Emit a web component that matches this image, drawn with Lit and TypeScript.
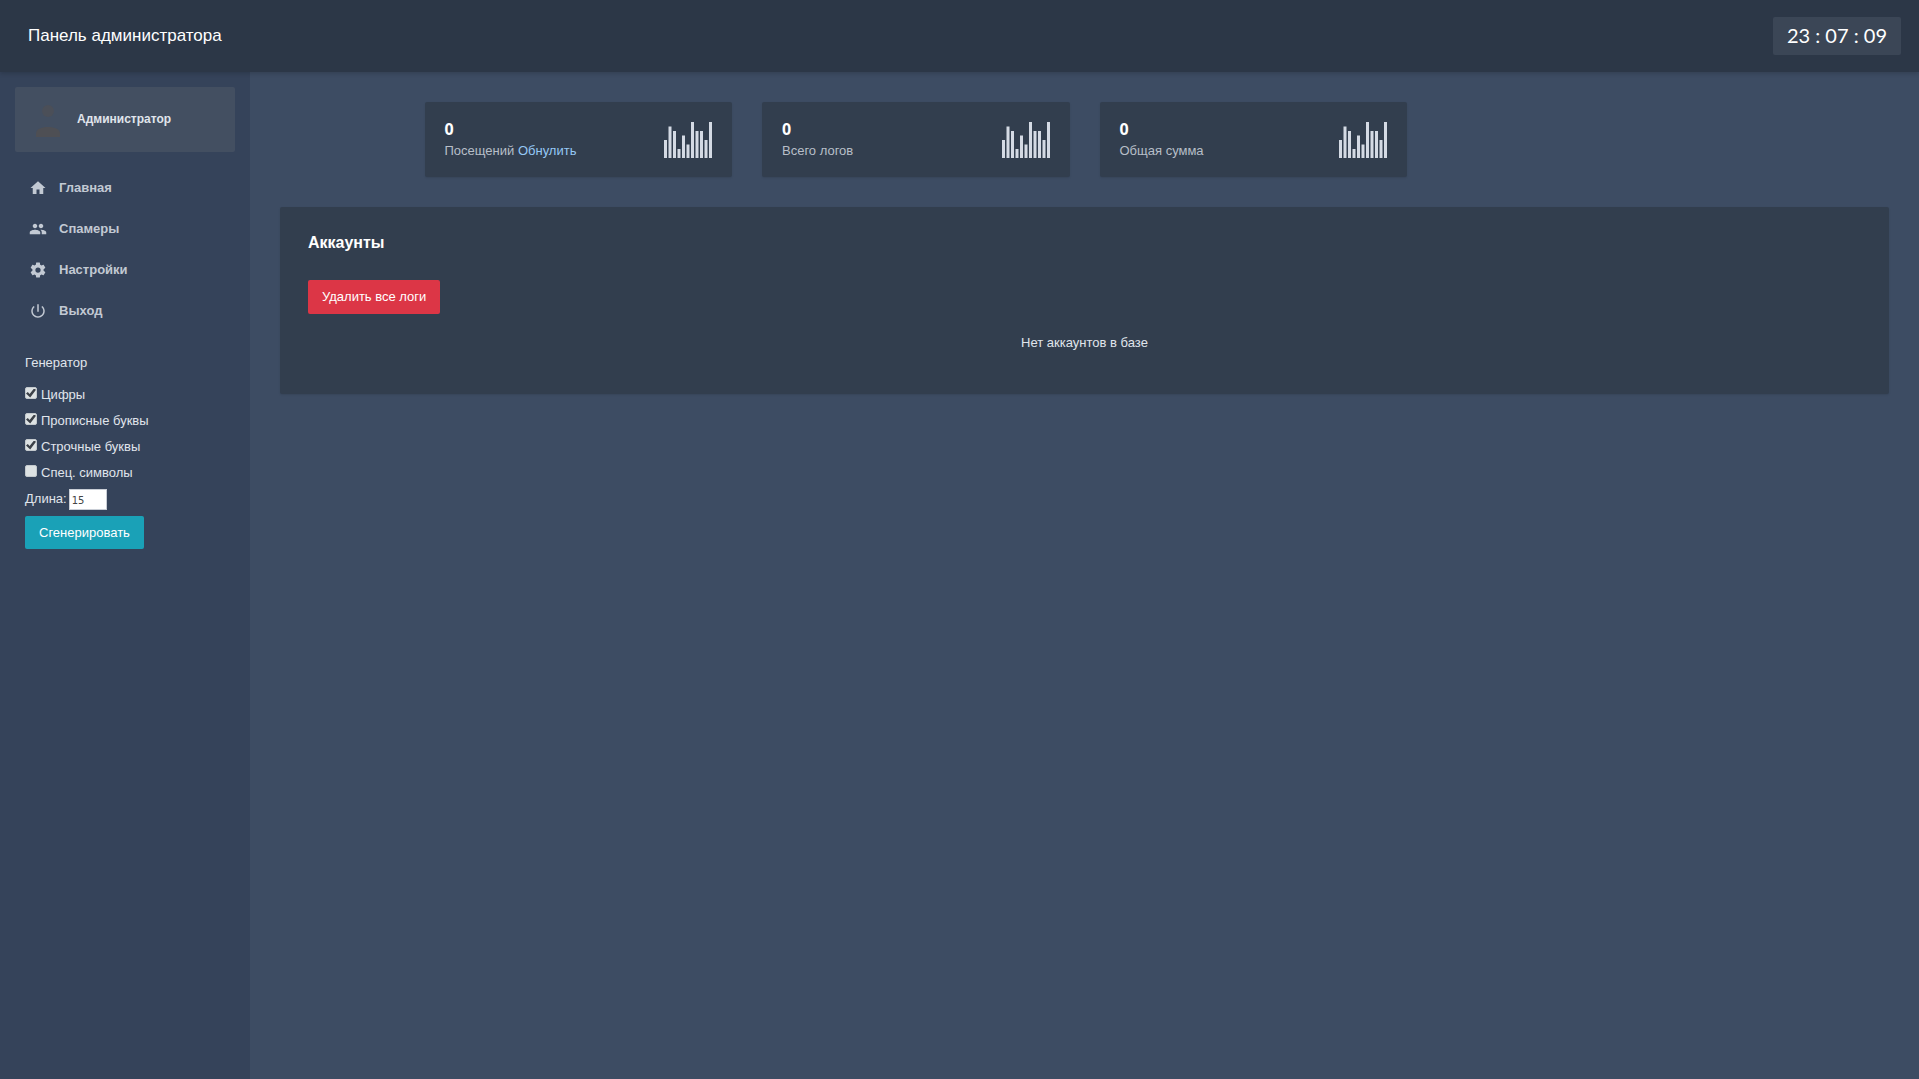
import { LitElement, html, css, svg } from "lit";
import { customElement, property, state } from "lit/decorators.js";

const NAV = [
  { label: "Главная", path: "M10 20v-6h4v6h5v-8h3L12 3 2 12h3v8z" },
  {
    label: "Спамеры",
    path: "M16 11c1.66 0 2.99-1.34 2.99-3S17.66 5 16 5c-1.66 0-3 1.34-3 3s1.34 3 3 3zm-8 0c1.66 0 2.99-1.34 2.99-3S9.66 5 8 5C6.34 5 5 6.34 5 8s1.34 3 3 3zm0 2c-2.33 0-7 1.17-7 3.5V19h14v-2.5c0-2.33-4.67-3.5-7-3.5zm8 0c-.29 0-.62.02-.97.05 1.16.84 1.97 1.97 1.97 3.45V19h6v-2.5c0-2.33-4.67-3.5-7-3.5z",
  },
  {
    label: "Настройки",
    path: "M12 15.5A3.5 3.5 0 0 1 8.5 12 3.5 3.5 0 0 1 12 8.5a3.5 3.5 0 0 1 3.5 3.5 3.5 3.5 0 0 1-3.5 3.5m7.43-2.53c.04-.32.07-.64.07-.97 0-.33-.03-.66-.07-1l2.11-1.63c.19-.15.24-.42.12-.64l-2-3.46c-.12-.22-.39-.31-.61-.22l-2.49 1c-.52-.39-1.06-.73-1.69-.98l-.37-2.65A.506.506 0 0 0 14 2h-4c-.25 0-.46.18-.5.42l-.37 2.65c-.63.25-1.17.59-1.69.98l-2.49-1c-.22-.09-.49 0-.61.22l-2 3.46c-.13.22-.07.49.12.64L4.57 11c-.04.34-.07.67-.07 1 0 .33.03.65.07.97l-2.11 1.66c-.19.15-.25.42-.12.64l2 3.46c.12.22.39.3.61.22l2.49-1.01c.52.4 1.06.74 1.69.99l.37 2.65c.04.24.25.42.5.42h4c.25 0 .46-.18.5-.42l.37-2.65c.63-.26 1.17-.59 1.69-.99l2.49 1.01c.22.08.49 0 .61-.22l2-3.46c.12-.22.07-.49-.12-.64z",
  },
  {
    label: "Выход",
    path: "M13 3h-2v10h2V3zm4.83 2.17l-1.42 1.42C17.99 7.86 19 9.81 19 12c0 3.87-3.13 7-7 7s-7-3.13-7-7c0-2.19 1.01-4.14 2.58-5.42L6.17 5.17C4.23 6.82 3 9.26 3 12c0 4.97 4.03 9 9 9s9-4.03 9-9c0-2.74-1.23-5.18-3.17-6.83z",
  },
];

const OPTIONS = [
  { id: "digits", label: "Цифры", checked: true },
  { id: "upper", label: "Прописные буквы", checked: true },
  { id: "lower", label: "Строчные буквы", checked: true },
  { id: "special", label: "Спец. символы", checked: false },
];

const BARS = [4, 7, 6, 2, 5, 3, 8, 6, 6, 4, 8];

@customElement("stat-card")
class StatCard extends LitElement {
  @property() value = "0";
  @property() label = "";
  @property() action = "";

  static styles = css`
    :host {
      display: flex;
      align-items: center;
      justify-content: space-between;
      min-width: 0;
      padding: 18px 20px 17px;
      border-radius: 2px;
      background: #323e4e;
      box-shadow: 0 1px 2px rgba(0, 0, 0, 0.1);
    }
    .value {
      margin: 0;
      font: 700 16px/18px "Open Sans", "Liberation Sans", sans-serif;
      color: #fff;
    }
    .label {
      margin: 0;
      padding-top: 4px;
      line-height: 18px;
      color: #b7bec8;
    }
    a {
      color: #95c8f5;
      text-decoration: none;
    }
    .chart {
      flex: none;
      width: 48px;
      height: 36px;
      fill: #d4dae4;
    }
  `;

  render() {
    return html`
      <div>
        <h2 class="value">${this.value}</h2>
        <p class="label">
          ${this.label}
          ${this.action ? html`<a href="#">${this.action}</a>` : ""}
        </p>
      </div>
      <svg class="chart" viewBox="0 0 48 36" aria-hidden="true">
        ${BARS.map(
          (n, i) => svg`<rect x=${i * 4.5} y=${36 - n * 4.5} width="3" height=${n * 4.5}></rect>`
        )}
      </svg>
    `;
  }
}

@customElement("password-generator")
class PasswordGenerator extends LitElement {
  static styles = css`
    form {
      display: flex;
      flex-direction: column;
      align-items: flex-start;
      padding: 0 10px;
      color: #e0e5ec;
    }
    .title {
      margin: 0 0 6px;
      font-size: 13px;
      font-weight: 400;
      line-height: 26px;
    }
    .option,
    .length {
      display: flex;
      align-items: center;
      gap: 4px;
      line-height: 26px;
      height: 26px;
    }
    .length {
      gap: 2px;
    }
    .check {
      appearance: none;
      display: grid;
      place-items: center;
      width: 12px;
      height: 12px;
      margin: 0 0 4px;
      border: 1px solid #c3c9cd;
      border-radius: 2px;
      background: #dde2e3;
    }
    .check:checked::after {
      content: "";
      width: 10px;
      height: 9px;
      background: #3c4148;
      clip-path: polygon(0 55%, 18% 40%, 36% 60%, 80% 0, 100% 14%, 42% 100%);
    }
    .number {
      box-sizing: border-box;
      width: 38px;
      height: 21px;
      padding: 2px 2px 0;
      border: 1px solid #c9ced6;
      background: #fff;
      color: #444;
      font: 10px "DejaVu Sans", sans-serif;
    }
    .submit {
      margin-top: 4px;
      padding: 7px 14px;
      border: 0;
      border-radius: 2px;
      background: #1aa1b7;
      color: #fff;
      font: 13px/19px "Liberation Sans", sans-serif;
    }
  `;

  render() {
    return html`
      <form @submit=${(e: Event) => e.preventDefault()}>
        <h2 class="title">Генератор</h2>
        ${OPTIONS.map(
          (o) => html`
            <label class="option" for=${o.id}>
              <input class="check" type="checkbox" id=${o.id} .checked=${o.checked} />
              ${o.label}
            </label>
          `
        )}
        <label class="length" for="length">
          Длина:
          <input class="number" id="length" type="text" inputmode="numeric" value="15" />
        </label>
        <button class="submit" type="submit">Сгенерировать</button>
      </form>
    `;
  }
}

@customElement("app-root")
class AppRoot extends LitElement {
  @state() private time = ["23", "07", "09"];

  static styles = css`
    :host {
      display: flex;
      flex-direction: column;
      min-height: 100vh;
      background: #3d4c63;
      color: #e0e5ec;
      font: 13px/20px "Liberation Sans", Arial, sans-serif;
    }
    .header {
      position: relative;
      display: flex;
      align-items: center;
      justify-content: space-between;
      height: 72px;
      padding: 0 18px 0 28px;
      background: #2c3747;
      box-shadow: 0 2px 4px rgba(0, 0, 0, 0.15);
    }
    .brand {
      margin: 0;
      font-size: 17px;
      font-weight: 400;
      color: #fff;
    }
    .clock {
      padding: 0 14px 2px;
      border-radius: 2px;
      background: #3b4656;
      color: #fff;
      font: 20px/36px Lato, sans-serif;
    }
    .body {
      flex: 1;
      display: flex;
    }
    .sidebar {
      flex: none;
      box-sizing: border-box;
      width: 250px;
      padding: 15px;
      background: #35435a;
    }
    .user {
      display: flex;
      align-items: center;
      gap: 12px;
      height: 65px;
      padding-left: 15px;
      border-radius: 2px;
      background: #434f61;
      font-size: 12px;
      line-height: 21px;
      font-weight: 700;
    }
    .avatar {
      width: 35px;
      height: 40px;
    }
    .nav {
      display: flex;
      flex-direction: column;
      padding: 15px 0 19px;
    }
    .link {
      display: flex;
      align-items: center;
      gap: 12px;
      padding: 0 14px;
      line-height: 41px;
      color: #c2c9d3;
      font-weight: 700;
      text-decoration: none;
    }
    .icon {
      width: 18px;
      height: 18px;
      fill: currentColor;
    }
    .content {
      flex: 1;
      min-width: 0;
      padding: 30px;
    }
    .stats {
      display: grid;
      grid-template-columns: repeat(4, 1fr);
      gap: 30px;
      max-width: 1320px;
      margin: 0 auto 30px;
    }
    .panel {
      padding: 26px 28px 41px;
      border-radius: 2px;
      background: #323e4e;
      box-shadow: 0 1px 2px rgba(0, 0, 0, 0.1);
    }
    .heading {
      margin: 0 0 27px;
      font-size: 16px;
      line-height: 20px;
      color: #fff;
    }
    .danger {
      display: block;
      padding: 7px 14px;
      border: 0;
      border-radius: 2px;
      background: #dc3646;
      color: #fff;
      font: 13px/20px "Liberation Sans", Arial, sans-serif;
    }
    .empty {
      margin: 19px 0 0;
      text-align: center;
    }
  `;

  render() {
    return html`
      <header class="header">
        <h1 class="brand">Панель администратора</h1>
        <time class="clock">${this.time.join(" : ")}</time>
      </header>
      <div class="body">
        <aside class="sidebar">
          <div class="user">
            <svg class="avatar" viewBox="0 0 35 40" aria-hidden="true">
              <circle cx="18" cy="11" r="6" fill="#4b4f58"></circle>
              <path d="M6 37v-3c0-5 5-7 12-7s12 2 12 7v3z" fill="#4e4f54"></path>
            </svg>
            <span>Администратор</span>
          </div>
          <nav class="nav">
            ${NAV.map(
              (n) => html`
                <a class="link" href="#">
                  <svg class="icon" viewBox="0 0 24 24" aria-hidden="true"><path d=${n.path}></path></svg>
                  ${n.label}
                </a>
              `
            )}
          </nav>
          <password-generator></password-generator>
        </aside>
        <main class="content">
          <section class="stats">
            <stat-card label="Посещений" action="Обнулить"></stat-card>
            <stat-card label="Всего логов"></stat-card>
            <stat-card label="Общая сумма"></stat-card>
          </section>
          <section class="panel">
            <h2 class="heading">Аккаунты</h2>
            <button class="danger" type="button">Удалить все логи</button>
            <p class="empty">Нет аккаунтов в базе</p>
          </section>
        </main>
      </div>
    `;
  }
}
